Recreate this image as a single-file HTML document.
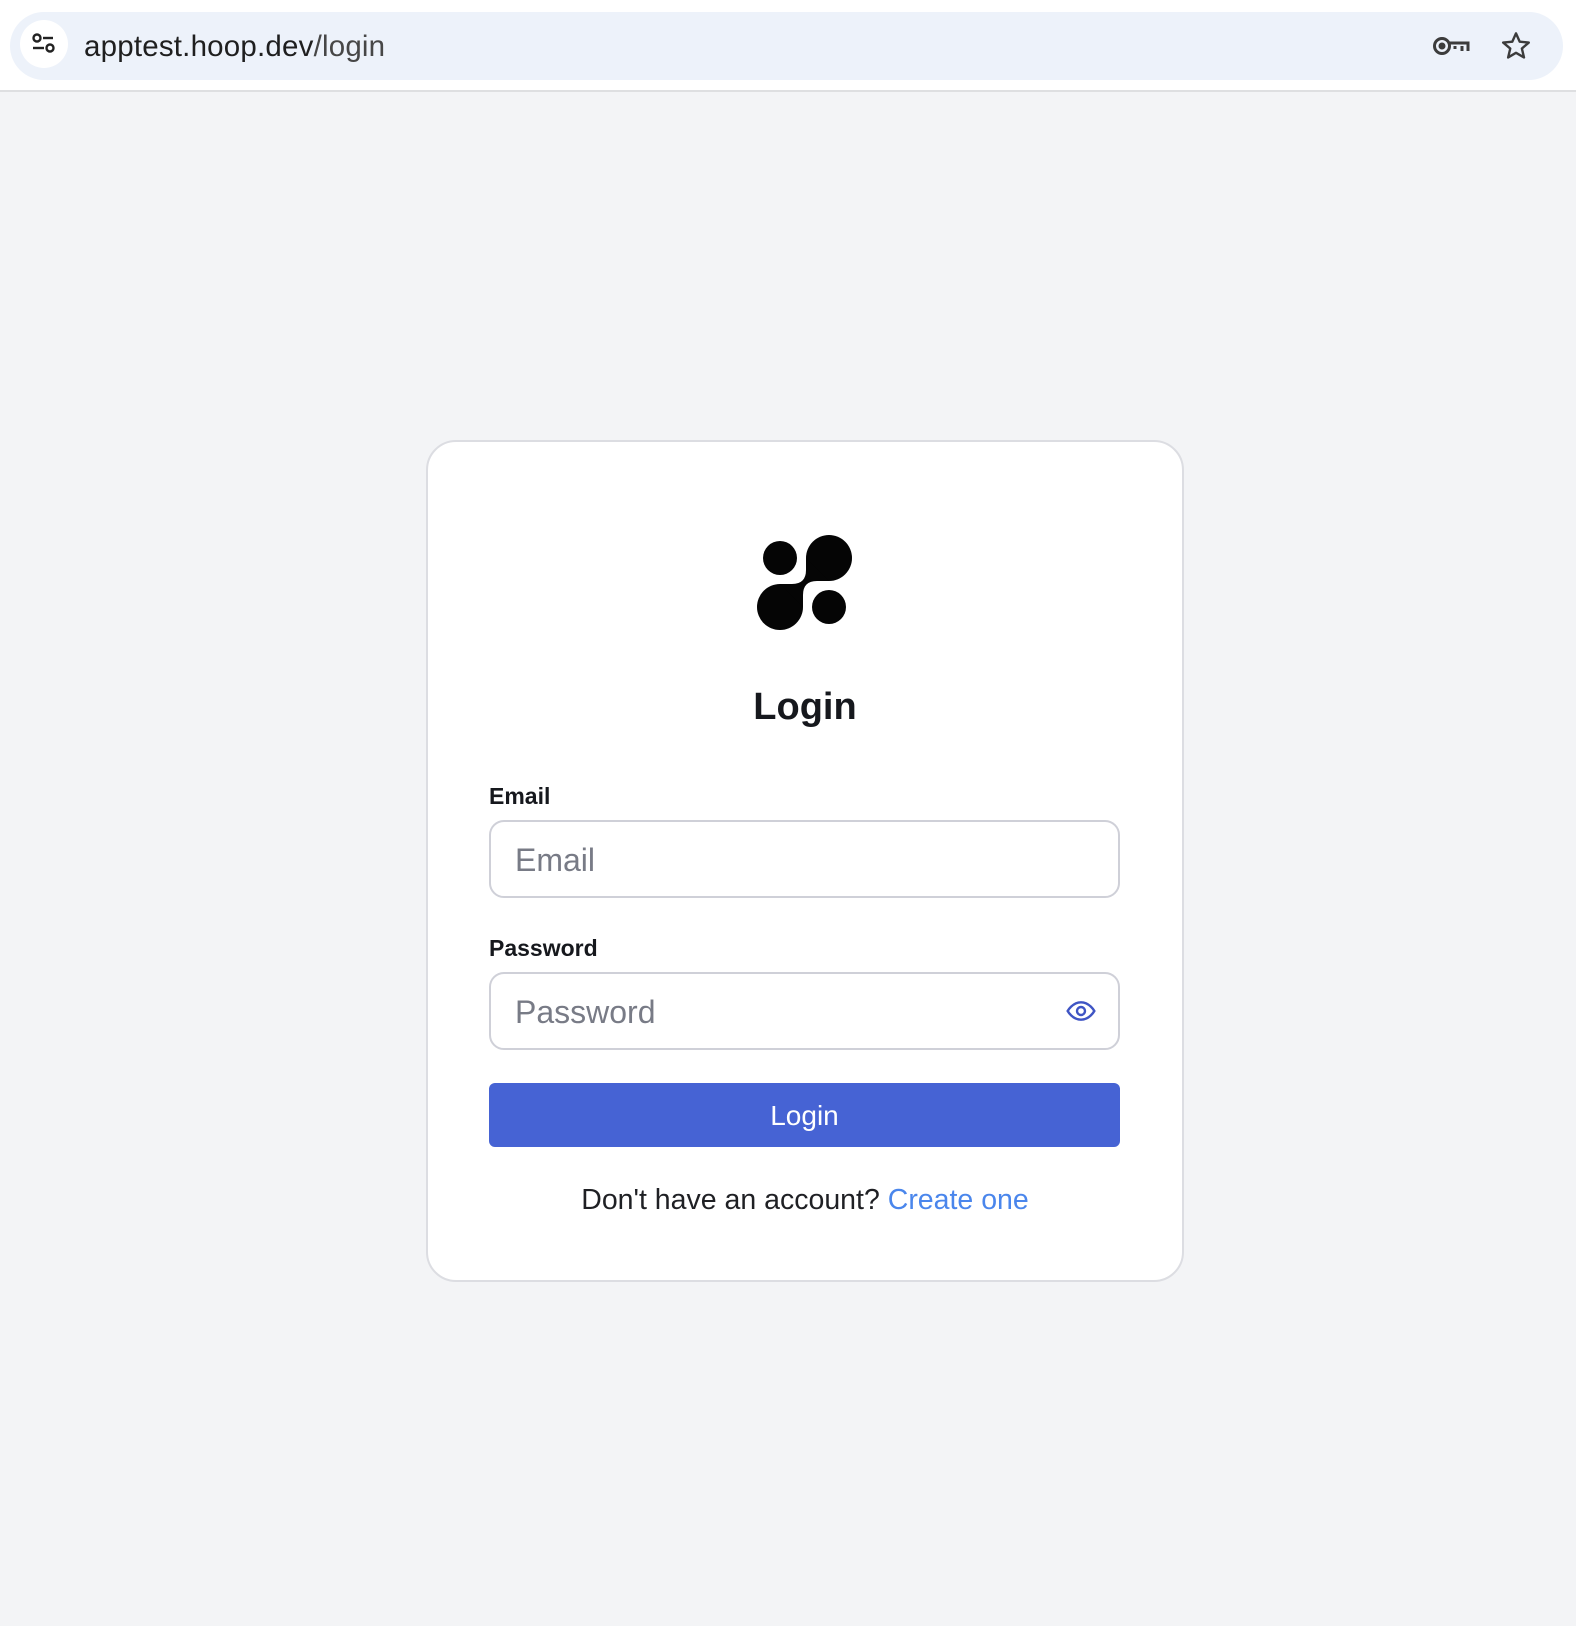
<!DOCTYPE html>
<html><head><meta charset="utf-8"><style>
*{box-sizing:border-box;margin:0;padding:0}
body{width:1576px;height:1626px;background:#f3f4f6;font-family:"Liberation Sans",sans-serif;position:relative;overflow:hidden}
.top{position:absolute;left:0;top:0;width:1576px;height:92px;background:#fff;border-bottom:2px solid #dedfe1}
.bar{position:absolute;left:10px;top:12px;width:1553px;height:68px;border-radius:34px;background:#edf2fa}
.tune{position:absolute;left:20px;top:20px;width:48px;height:48px;border-radius:24px;background:#fff}
.url{position:absolute;left:84px;top:30px;font-size:29.5px;color:#1f1f1f;letter-spacing:0.2px}
.url span{color:#474747}
.card{position:absolute;left:426px;top:440px;width:758px;height:842px;background:#fff;border:2px solid #dcdde2;border-radius:30px}
.title{position:absolute;left:426px;width:758px;top:686px;text-align:center;font-size:38px;font-weight:bold;color:#16181d}
.lbl{position:absolute;left:489px;font-size:23px;font-weight:bold;color:#16181d}
.inp{position:absolute;left:489px;width:631px;height:78px;border:2px solid #cfd0d8;border-radius:15px;background:#fff}
.ph{position:absolute;left:24px;top:20px;font-size:32px;color:#787b86}
.btn{position:absolute;left:489px;top:1083px;width:631px;height:64px;background:#4663d4;border-radius:6px;color:#fff;font-size:28px;text-align:center;line-height:66px}
.foot{position:absolute;left:426px;width:758px;top:1184px;text-align:center;font-size:28.5px;color:#1f2024}
.foot a{color:#4a86ec;text-decoration:none}
</style></head><body>
<div class="top"><div class="bar"></div>
<div class="tune"><svg width="48" height="48" viewBox="0 0 48 48" fill="none" stroke="#222" stroke-width="2.4"><circle cx="17" cy="18" r="3.5"/><line x1="23" y1="18" x2="33" y2="18"/><line x1="13" y1="28" x2="24" y2="28"/><circle cx="30" cy="28" r="3.5"/></svg></div>
<div class="url">apptest.hoop.dev<span>/login</span></div>
<svg style="position:absolute;left:1432px;top:34px" width="40" height="24" viewBox="0 0 40 24" fill="none" stroke="#3c3c3c" stroke-width="3"><circle cx="10" cy="12" r="7.5"/><circle cx="10" cy="12" r="2" fill="#3c3c3c"/><path d="M17.5 9H36V17M30 12V17M23 12V15"/></svg>
<svg style="position:absolute;left:1500px;top:30px" width="32" height="32" viewBox="0 0 24 24" fill="none" stroke="#3c3c3c" stroke-width="1.8" stroke-linejoin="round"><path d="M12 2.5l2.8 6.3 6.8.6-5.2 4.5 1.6 6.7L12 17.1l-5.9 3.5 1.6-6.7L2.4 9.4l6.8-.6z"/></svg>
</div>
<div class="card"></div>
<svg style="position:absolute;left:740px;top:520px" width="120" height="120" viewBox="740 520 120 120">
<circle cx="780" cy="558" r="17" fill="#050505"/>
<circle cx="829" cy="558" r="23" fill="#050505"/>
<circle cx="780" cy="607" r="23" fill="#050505"/>
<circle cx="829" cy="607" r="17" fill="#050505"/>
<path d="M806 558 L806 570 Q806 584 792 584 L780 584 L803 607 L803 595 Q803 581 817 581 L829 581 Z" fill="#050505"/>
</svg>
<div class="title">Login</div>
<div class="lbl" style="top:783px">Email</div>
<div class="inp" style="top:820px"><div class="ph">Email</div></div>
<div class="lbl" style="top:935px">Password</div>
<div class="inp" style="top:972px"><div class="ph">Password</div>
<svg style="position:absolute;left:574px;top:21px" width="32" height="32" viewBox="0 0 24 24" fill="none" stroke="#3f55c4" stroke-width="1.8"><path d="M2 12s3.6-6.5 10-6.5S22 12 22 12s-3.6 6.5-10 6.5S2 12 2 12z"/><circle cx="12" cy="12" r="3"/></svg></div>
<div class="btn">Login</div>
<div class="foot">Don't have an account? <a>Create one</a></div>
</body></html>
